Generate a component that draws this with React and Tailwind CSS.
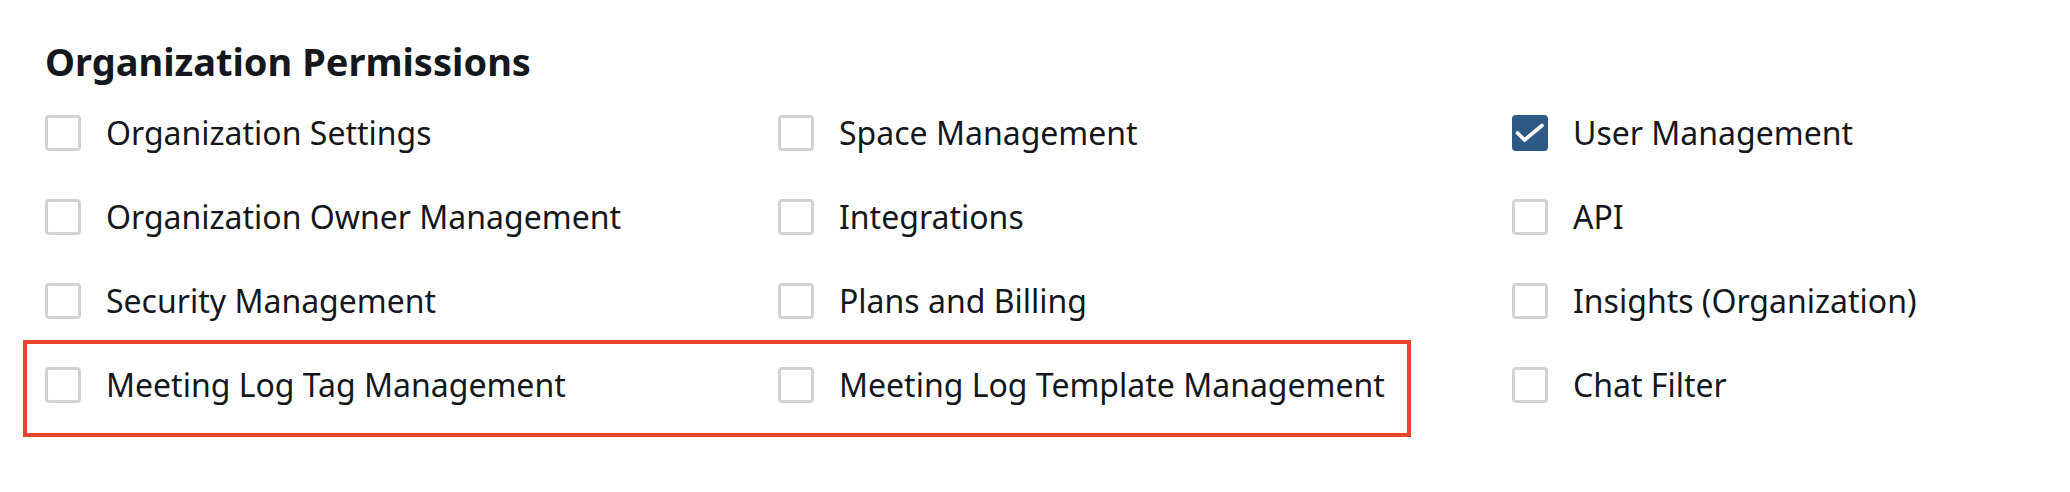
import React from "react";

const items = [
  ["Organization Settings", false],
  ["Space Management", false],
  ["User Management", true],
  ["Organization Owner Management", false],
  ["Integrations", false],
  ["API", false],
  ["Security Management", false],
  ["Plans and Billing", false],
  ["Insights (Organization)", false],
  ["Meeting Log Tag Management", false],
  ["Meeting Log Template Management", false],
  ["Chat Filter", false],
];

function Box({ checked }) {
  if (checked) {
    return (
      <span className="flex h-[36px] w-[36px] shrink-0 items-center justify-center rounded-[4px] bg-[#2c5a85]">
        <svg width="36" height="36" viewBox="0 0 36 36" fill="none">
          <polyline
            points="5.5,18 12.5,25 30,10.5"
            stroke="white"
            strokeWidth="3.6"
            strokeLinecap="round"
            strokeLinejoin="round"
          />
        </svg>
      </span>
    );
  }
  return (
    <span className="h-[36px] w-[36px] shrink-0 rounded-[4px] border-[3px] border-[#d2d2d4] bg-white" />
  );
}

export default function App() {
  return (
    <div
      className="h-[492px] w-full bg-white pl-[45px] pt-[37px] text-[#14171c]"
      style={{ fontFamily: '"Noto Sans", "Open Sans", sans-serif' }}
    >
      <h2 className="h-[48px] text-[38px] font-bold leading-[48px]">Organization Permissions</h2>
      <div className="relative mt-[30px]">
        <div className="grid grid-cols-[733px_734px_1fr] gap-y-[48px]">
          {items.map(([label, checked]) => (
            <label key={label} className="flex h-[36px] items-center gap-[25px]">
              <Box checked={checked} />
              <span className="whitespace-nowrap text-[32px] leading-[36px]">{label}</span>
            </label>
          ))}
        </div>
        <div className="pointer-events-none absolute left-[-22px] top-[225px] h-[97px] w-[1388px] border-4 border-[#e8452c]" />
      </div>
    </div>
  );
}
